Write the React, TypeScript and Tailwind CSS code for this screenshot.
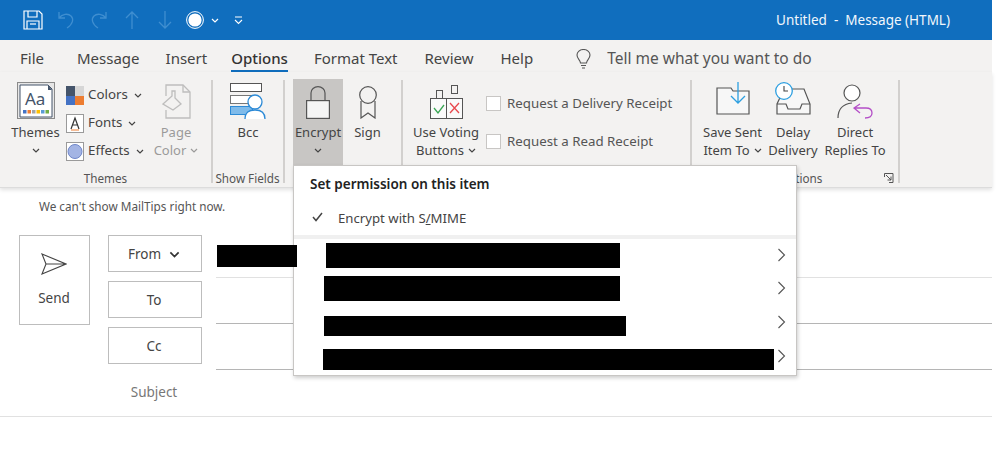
import React from "react";

const Chev = ({ c = "#444", w = 8 }: { c?: string; w?: number }) => (
  <svg width={w} height={w === 8 ? 5 : 7} viewBox="0 0 8 5" className="inline-block shrink-0" preserveAspectRatio="none">
    <path d="M1 1l3 3 3-3" fill="none" stroke={c} strokeWidth="1.2" />
  </svg>
);

const Separator = () => <div className="w-[2px] h-[103px] mt-[1px] bg-[#d2d0ce] shrink-0" />;

const Big = ({ w, icon, l1, l2, bg, chev, cls }: { w: number; icon: React.ReactNode; l1: string; l2?: React.ReactNode; bg?: string; chev?: boolean; cls?: string }) => (
  <div className={`flex flex-col items-center shrink-0 h-[87px] ${bg ?? ""} ${cls ?? ""}`} style={{ width: w }}>
    <div className="h-[40px] flex items-end justify-center">{icon}</div>
    <div className="h-[18px] mt-[4px] text-[13px] leading-[18px] text-[#444] whitespace-nowrap">{l1}</div>
    <div className="h-[18px] text-[13px] leading-[18px] text-[#444] whitespace-nowrap flex items-center justify-center gap-[4px]">
      {l2}
      {chev && <Chev />}
    </div>
  </div>
);

const GroupLabel = ({ children }: { children: React.ReactNode }) => (
  <div className="h-[17px] text-[11.7px] leading-[17px] text-[#555] text-center whitespace-nowrap">{children}</div>
);

const Small = ({ icon, label }: { icon: React.ReactNode; label: string }) => (
  <div className="flex items-center h-[20px] gap-[4px] text-[13.3px] text-[#444] whitespace-nowrap">
    {icon}
    <span>{label}</span>
    <span className="ml-[2px] flex"><Chev /></span>
  </div>
);

const Tab = ({ label, ml, active }: { label: string; ml: number; active?: boolean }) => (
  <div className="relative h-[32px] leading-[36px] text-[15px] text-[#444] whitespace-nowrap" style={{ marginLeft: ml }}>
    <span className={active ? "font-medium text-[#333]" : ""}>{label}</span>
    {active && <div className="absolute left-0 right-0 top-[30px] h-[3px] bg-[#106ebe]" />}
  </div>
);

const RowChevron = () => (
  <svg width={9} height={14} viewBox="0 0 9 14" className="shrink-0">
    <path d="M1.5 1l6 6-6 6" fill="none" stroke="#555" strokeWidth="1.1" />
  </svg>
);

const MenuRow = ({ pl, w, h, rowH, mt = 0 }: { pl: number; w: number; h: number; rowH: number; mt?: number }) => (
  <div className="relative flex items-center" style={{ height: rowH, paddingLeft: pl }}>
    <div className="bg-black" style={{ width: w, height: h, marginTop: mt }} />
    <div className="absolute left-[483px] top-0 bottom-0 flex items-center"><RowChevron /></div>
  </div>
);

const FieldBtn = ({ children }: { children: React.ReactNode }) => (
  <div className="w-[94px] h-[37px] border border-[#bdbdbd] flex items-center justify-center gap-[8px] pt-[2px] pr-[2px] text-[13.5px] text-[#444]">{children}</div>
);

export default function App() {
  return (
    <div className="relative w-[999px] h-[473px] bg-white overflow-hidden" style={{ fontFamily: '"Noto Sans", "Open Sans", sans-serif' }}>
      <div className="w-[992px]">
        {/* Title bar */}
        <div className="h-[40px] bg-[#106ebe] flex items-center text-white">
          <svg width={20} height={20} viewBox="0 0 20 20" className="ml-[23px]" fill="none" stroke="#ffffff" strokeWidth="1.2">
            <path d="M1 1h15l3 3v15H1z" /><path d="M5 1v6h9V1M4 19v-8h12v8" /><path d="M7 14h6" />
          </svg>
          <svg width={18} height={20} viewBox="0 0 18 20" className="ml-[14px]" fill="none" stroke="#3f8ed0" strokeWidth="1.3">
            <path d="M2 2v6h6M2 8c3-4 9-5 12-2 3 3 2 8-4 12" />
          </svg>
          <svg width={18} height={20} viewBox="0 0 18 20" className="ml-[15px]" fill="none" stroke="#3f8ed0" strokeWidth="1.3">
            <path d="M16 2v6h-6M16 8c-3-4-9-5-12-2-3 3-2 8 4 12" />
          </svg>
          <svg width={14} height={18} viewBox="0 0 14 18" className="ml-[17px]" fill="none" stroke="#3f8ed0" strokeWidth="1.3">
            <path d="M7 18V1M1 7l6-6 6 6" />
          </svg>
          <svg width={14} height={18} viewBox="0 0 14 18" className="ml-[19px]" fill="none" stroke="#3f8ed0" strokeWidth="1.3">
            <path d="M7 0v17M1 11l6 6 6-6" />
          </svg>
          <svg width={18} height={18} viewBox="0 0 18 18" className="ml-[14px]">
            <circle cx="9" cy="9" r="8.4" fill="none" stroke="#fff" strokeWidth="1" />
            <circle cx="9" cy="9" r="6.6" fill="#fff" />
          </svg>
          <span className="ml-[7px] flex"><Chev c="#fff" /></span>
          <svg width={9} height={9} viewBox="0 0 9 9" className="ml-[15px]" fill="none" stroke="#fff" strokeWidth="1.1">
            <path d="M1 1h7M1 4l3.5 3.5L8 4" />
          </svg>
          <div className="ml-auto mr-[42px] text-[13.5px] text-[#f2f7fc] whitespace-pre">Untitled  -  Message (HTML)</div>
        </div>

        {/* Tabs */}
        <div className="h-[32px] bg-[#f3f2f1] flex items-start relative">
          <Tab label="File" ml={20} />
          <Tab label="Message" ml={33} />
          <Tab label="Insert" ml={26} />
          <Tab label="Options" ml={24} active />
          <Tab label="Format Text" ml={26} />
          <Tab label="Review" ml={27} />
          <Tab label="Help" ml={27} />
          <svg width={17} height={20} viewBox="0 0 17 20" className="ml-[42px] mt-[9px]" fill="none" stroke="#555" strokeWidth="1.1">
            <path d="M5.5 14c0-3-3.5-4-3.5-8a6.5 5.5 0 0 1 13 0c0 4-3.500 5-3.500 8zM6 16.500h5M7 19h3" />
          </svg>
          <div className="ml-[15px] h-[32px] leading-[36px] text-[15.5px] text-[#555] whitespace-nowrap">Tell me what you want to do</div>
        </div>

        {/* Ribbon */}
        <div className="h-[116px] bg-[#f3f2f1] border-b border-[#dcdcdc] shadow-[0_2px_4px_rgba(0,0,0,0.12)] flex items-start relative pt-[7px]">
          {/* Themes group */}
          <div className="w-[211px] shrink-0">
            <div className="h-[87px] flex">
              <Big
                w={47}
                cls="ml-[12px]"
                icon={
                  <svg width={38} height={37} viewBox="0 0 38 37">
                    <rect x=".5" y=".5" width="37" height="36" fill="#e6e6e6" stroke="#8a8a8a" />
                    <path d="M3 3h28l4 4v28H3z" fill="#fff" stroke="#44546a" />
                    <path d="M31 3v5h4" fill="#44546a" />
                    <text x="8" y="23" fontSize="17" fill="#44546a" fontFamily="Noto Sans">Aa</text>
                    <g>
                      <rect x="6" y="28" width="3.500" height="3.500" fill="#4472c4" />
                      <rect x="10.500" y="28" width="3.500" height="3.500" fill="#ed7d31" />
                      <rect x="15" y="28" width="3.500" height="3.500" fill="#a5a5a5" />
                      <rect x="19.500" y="28" width="3.500" height="3.500" fill="#ffc000" />
                      <rect x="24" y="28" width="3.500" height="3.500" fill="#5b9bd5" />
                      <rect x="28.500" y="28" width="3.500" height="3.500" fill="#70ad47" />
                    </g>
                  </svg>
                }
                l1="Themes"
                chev
              />
              <div className="ml-[7px] w-[80px] flex flex-col gap-[8px] pt-[6px]">
                <Small
                  label="Colors"
                  icon={
                    <svg width={18} height={19} viewBox="0 0 18 19">
                      <rect width="9" height="10" fill="#44546a" /><rect x="9" width="9" height="10" fill="#d6d6d6" />
                      <rect y="10" width="9" height="9" fill="#4472c4" /><rect x="9" y="10" width="9" height="9" fill="#ed7d31" />
                    </svg>
                  }
                />
                <Small
                  label="Fonts"
                  icon={
                    <svg width={18} height={19} viewBox="0 0 18 19">
                      <rect x=".5" y=".5" width="17" height="18" fill="#fff" stroke="#9a9a9a" />
                      <path d="M5 15L9 4l4 11M6.500 11h5" fill="none" stroke="#333" strokeWidth="1.2" />
                      <path d="M5 16h8" stroke="#ed7d31" strokeWidth="1" />
                    </svg>
                  }
                />
                <Small
                  label="Effects"
                  icon={
                    <svg width={18} height={19} viewBox="0 0 18 19">
                      <rect x=".5" y=".5" width="17" height="18" fill="#fff" stroke="#9a9a9a" />
                      <circle cx="9" cy="9.500" r="7" fill="#a3b4e4" stroke="#6f86c9" />
                    </svg>
                  }
                />
              </div>
              <div className="opacity-50 ml-[2px]">
                <Big
                  w={56}
                  icon={
                    <svg width={29} height={35} viewBox="0 0 29 35" fill="none" stroke="#8a8a8a" strokeWidth="1.300">
                      <path d="M4 12V1h17l7 7v26H4v-8" /><path d="M21 1v7h7" />
                      <path d="M1 20l9-8v-5h3v7l6 6-8 6z" />
                    </svg>
                  }
                  l1="Page"
                  l2="Color"
                  chev
                />
              </div>
            </div>
            <div className="mt-[4px]"><GroupLabel>Themes</GroupLabel></div>
          </div>
          <Separator />
          {/* Show fields */}
          <div className="w-[70px] shrink-0">
            <div className="h-[87px]">
              <Big
                w={70}
                icon={
                  <svg width={37} height={36} viewBox="0 0 37 36" fill="none">
                    <rect x=".5" y=".5" width="31" height="8" fill="#fff" stroke="#555" />
                    <rect x=".5" y="12.500" width="24" height="8" fill="#fff" stroke="#777" />
                    <rect x=".5" y="23.500" width="22" height="8" fill="#7fbbea" stroke="#2c8ad6" />
                    <circle cx="25" cy="19" r="7" fill="#fff" stroke="#2c8ad6" strokeWidth="1.300" />
                    <path d="M15 36c0-7 4-9 10-9s10 2 10 9" fill="#fff" stroke="#2c8ad6" strokeWidth="1.300" />
                  </svg>
                }
                l1="Bcc"
              />
            </div>
            <div className="mt-[4px] -ml-[1px]"><GroupLabel>Show Fields</GroupLabel></div>
          </div>
          <Separator />
          {/* Encrypt group */}
          <div className="w-[116px] shrink-0 flex pl-[8px]">
            <Big
              w={50}
              bg="bg-[#c8c6c4]"
              icon={
                <svg width={24} height={33} viewBox="0 0 24 33" fill="none" stroke="#555" strokeWidth="1.200">
                  <rect x=".6" y="14.600" width="22.800" height="17.800" fill="#f5f5f5" />
                  <path d="M5 14.500V7a7 6.300 0 0 1 14 0v7.500" />
                </svg>
              }
              l1="Encrypt"
              chev
            />
            <Big
              w={49}
              icon={
                <svg width={20} height={33} viewBox="0 0 20 33" fill="none" stroke="#555" strokeWidth="1.200">
                  <circle cx="10" cy="9" r="8.300" />
                  <path d="M3 15v17l7-5 7 5V15" />
                </svg>
              }
              l1="Sign"
            />
          </div>
          <Separator />
          {/* Voting */}
          <div className="w-[287px] shrink-0 flex">
            <Big
              w={82}
              cls="ml-[2px]"
              icon={
                <svg width={33} height={34} viewBox="0 0 33 34" fill="none">
                  <rect x="6.500" y="5.500" width="6" height="8" stroke="#555" />
                  <rect x="21.500" y=".5" width="6" height="8" stroke="#555" />
                  <rect x=".5" y="13.500" width="32" height="20" fill="#fafafa" stroke="#555" />
                  <path d="M16.500 13v21" stroke="#555" />
                  <path d="M4 23l4 5 6-8" stroke="#3aa655" strokeWidth="1.300" />
                  <path d="M20 18l9 10M29 18l-9 10" stroke="#e8484d" strokeWidth="1.300" />
                </svg>
              }
              l1="Use Voting"
              l2="Buttons"
              chev
            />
            <div className="flex flex-col gap-[23px] pt-[17px] -ml-[1px] text-[13.3px] text-[#555] whitespace-nowrap">
              {["Request a Delivery Receipt", "Request a Read Receipt"].map((t) => (
                <div key={t} className="flex items-center gap-[6px] h-[15px]">
                  <div className="w-[15px] h-[15px] bg-white border border-[#c8c6c4]" />
                  <span>{t}</span>
                </div>
              ))}
            </div>
          </div>
          <Separator />
          {/* More options */}
          <div className="w-[206px] shrink-0 relative">
            <div className="flex pl-[9px]">
              <Big
                w={63}
                icon={
                  <svg width={34} height={33} viewBox="0 0 34 33" fill="none" className="mb-[4px]">
                    <path d="M1 32V6h14l2 3h16v23z" fill="#f7f7f7" stroke="#555" strokeWidth="1.200" />
                    <path d="M22 0v21M15 14l7 7 7-7" stroke="#2d9fe0" strokeWidth="1.300" />
                  </svg>
                }
                l1="Save Sent"
                l2="Item To"
                chev
              />
              <Big
                w={58}
                icon={
                  <svg width={37} height={33} viewBox="0 0 37 33" fill="none" className="mb-[4px]">
                    <path d="M9 7h20l6 15v10H2V22z" fill="#f7f7f7" stroke="#555" strokeWidth="1.200" />
                    <path d="M2 22h9l2 5h12l2-5h8" stroke="#555" strokeWidth="1.200" />
                    <circle cx="9" cy="9" r="8.300" fill="#fff" stroke="#2d9fe0" strokeWidth="1.300" />
                    <path d="M9 4v5h4" stroke="#444" strokeWidth="1.100" />
                  </svg>
                }
                l1="Delay"
                l2="Delivery"
              />
              <Big
                w={66}
                icon={
                  <svg width={36} height={35} viewBox="0 0 36 35" fill="none">
                    <circle cx="15" cy="9" r="8" fill="#fff" stroke="#555" strokeWidth="1.200" />
                    <path d="M1 34c0-9 5-14 14-15" stroke="#555" strokeWidth="1.200" />
                    <path d="M23 20l-6 4 6 5M17 24h12c5 0 6 3 6 5s-1 5-7 5" stroke="#b44fc7" strokeWidth="1.300" />
                  </svg>
                }
                l1="Direct"
                l2="Replies To"
              />
            </div>
            <div className="absolute left-[87px] top-[91px]"><GroupLabel>Options</GroupLabel></div>
            <svg width={10} height={10} viewBox="0 0 10 10" className="absolute left-[192px] top-[94px]" fill="none" stroke="#555">
              <path d="M.5 4V.5h8.500v9H5M2 2l5 5M7 3.500V7H3.500" />
            </svg>
          </div>
          <Separator />
        </div>

        {/* Compose */}
        <div className="h-[229px] border-b border-[#e1e1e1]">
          <div className="pl-[39px] pt-[10px] h-[47px] text-[11.75px] leading-[17px] text-[#555]">We can't show MailTips right now.</div>
          <div className="flex items-start">
            <div className="ml-[19px] w-[71px] h-[90px] border border-[#bdbdbd] flex flex-col items-center pt-[17px] pr-[1px] text-[13.5px] text-[#444]">
              <svg width={26} height={22} viewBox="0 0 26 22" fill="none" stroke="#444" strokeWidth="1.100">
                <path d="M1 1l24 10L1 21l4-10zM5 11h20" />
              </svg>
              <span className="mt-[13px]">Send</span>
            </div>
            <div className="ml-[18px] flex flex-col gap-[9px]">
              <FieldBtn>From <Chev c="#333" w={11} /></FieldBtn>
              <FieldBtn>To</FieldBtn>
              <FieldBtn>Cc</FieldBtn>
              <div className="text-[13.5px] text-[#777] text-center mt-[9px] pr-[2px]">Subject</div>
            </div>
            <div className="ml-[14px] flex-1 -mt-[4px]">
              <div className="h-[47px] border-b border-[#e1e1e1] pt-[14px] pl-[1px]"><div className="relative z-10 w-[80px] h-[22px] bg-black" /></div>
              <div className="h-[46px] border-b border-[#b5b5b5]" />
              <div className="h-[46px] border-b border-[#b5b5b5]" />
            </div>
          </div>
        </div>
      </div>

      {/* Dropdown menu */}
      <div className="absolute z-[5] left-[293px] top-[165px] w-[504px] h-[211px] bg-white border border-[#c8c6c4] shadow-[1px_2px_4px_rgba(0,0,0,0.2)]">
        <div className="h-[36px] pl-[16px] flex items-center text-[13.5px] font-semibold text-[#222]">Set permission on this item</div>
        <div className="h-[33px] flex items-center text-[13.2px] text-[#444]">
          <svg width={11} height={10} viewBox="0 0 11 10" className="ml-[18px] mb-[3px]" fill="none" stroke="#444" strokeWidth="1.500">
            <path d="M1 5l3 3.500L10 1" />
          </svg>
          <span className="ml-[15px]">Encrypt with S<span className="underline">/</span>MIME</span>
        </div>
        <div className="h-[4px] bg-[#f0f0f0]" />
        <MenuRow pl={32} w={294} h={25} rowH={32} />
        <MenuRow pl={30} w={296} h={25} rowH={34} />
        <MenuRow pl={30} w={302} h={20} rowH={34} mt={8} />
        <MenuRow pl={29} w={451} h={21} rowH={34} mt={6} />
      </div>
    </div>
  );
}
